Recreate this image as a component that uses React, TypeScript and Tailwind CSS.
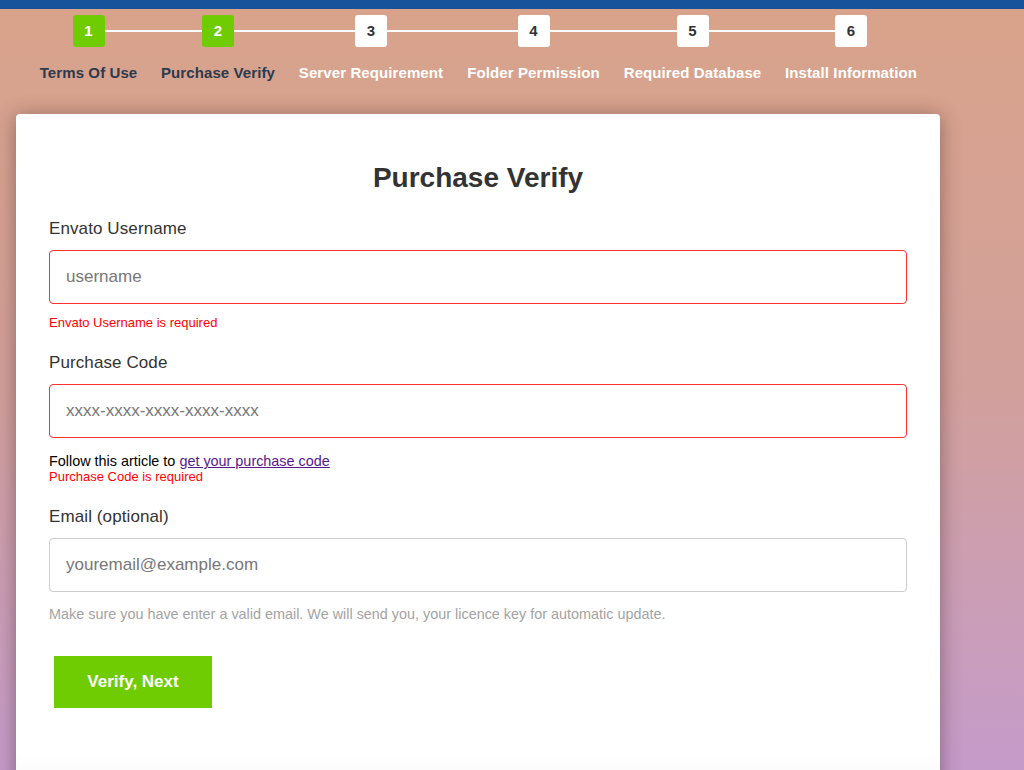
import React from "react";

const steps = [
  { n: 1, label: "Terms Of Use", done: true, w: "w-[121px]" },
  { n: 2, label: "Purchase Verify", done: true, w: "w-[138px]" },
  { n: 3, label: "Server Requirement", done: false, w: "w-[168px]" },
  { n: 4, label: "Folder Permission", done: false, w: "w-[157px]" },
  { n: 5, label: "Required Database", done: false, w: "w-[161px]" },
  { n: 6, label: "Install Information", done: false, w: "w-[156px]" },
];

export default function App() {
  return (
    <div
      className="h-screen w-full overflow-hidden bg-linear-to-b from-[#d9a38a] via-[#d2a09b] to-[#c59bca]"
      style={{ fontFamily: '"Liberation Sans", Arial, Helvetica, sans-serif' }}
    >
      <div className="h-[9px] bg-[#17539b]" />

      {/* Stepper */}
      <div className="flex pl-[28px] pt-[6px]">
        {steps.map((s, i) => (
          <div key={s.n} className={`flex flex-col items-center ${s.w}`}>
            <div className="flex w-full items-center">
              <div className={`h-[2px] flex-1 ${i === 0 ? "bg-transparent" : "bg-white"}`} />
              <div
                className={`flex h-[32px] w-[32px] items-center justify-center rounded-[3px] text-[15px] font-bold ${
                  s.done ? "bg-[#6fcc02] text-white" : "bg-white text-[#333]"
                }`}
              >
                {s.n}
              </div>
              <div className={`h-[2px] flex-1 ${i === steps.length - 1 ? "bg-transparent" : "bg-white"}`} />
            </div>
            <div
              className={`mt-[17px] text-center text-[15px] font-bold leading-[17px] tracking-[0.1px] whitespace-nowrap ${
                s.done ? "text-[#2b3a4e]" : "text-white"
              }`}
            >
              {s.label}
            </div>
          </div>
        ))}
      </div>

      {/* Card */}
      <div className="ml-[16px] mt-[33px] w-[924px] rounded-[4px] bg-white shadow-[0_2px_20px_rgba(60,30,30,0.45)]">
        <div className="px-[33px] pt-[48px]">
          <h1 className="text-center text-[28px] font-bold leading-[32px] text-[#333]">Purchase Verify</h1>

          <div className="mt-[25px] text-[17px] leading-[20px] tracking-[0.1px] text-[#333]">Envato Username</div>
          <input
            className="mt-[11px] block h-[54px] w-full rounded-[4px] border border-[#ff3030] px-[16px] text-[17px] text-[#333] outline-none placeholder:text-[#777]"
            placeholder="username"
          />
          <div className="mt-[11px] text-[13px] leading-[15px] text-[#ff0000]">Envato Username is required</div>

          <div className="mt-[23px] text-[17px] leading-[20px] tracking-[0.1px] text-[#333]">Purchase Code</div>
          <input
            className="mt-[11px] block h-[54px] w-full rounded-[4px] border border-[#ff3030] px-[16px] text-[17px] text-[#333] outline-none placeholder:text-[#777]"
            placeholder="xxxx-xxxx-xxxx-xxxx-xxxx"
          />
          <div className="mt-[15px] text-[14.4px] leading-[16px] text-black">
            Follow this article to{" "}
            <a href="#" className="text-[#551a8b] underline">
              get your purchase code
            </a>
          </div>
          <div className="text-[13px] leading-[16px] text-[#ff0000]">Purchase Code is required</div>

          <div className="mt-[22px] text-[17px] leading-[20px] tracking-[0.1px] text-[#333]">Email (optional)</div>
          <input
            className="mt-[11px] block h-[54px] w-full rounded-[4px] border border-[#cccccc] px-[16px] text-[17px] text-[#333] outline-none placeholder:text-[#777]"
            placeholder="youremail@example.com"
          />
          <div className="mt-[14px] text-[14.4px] leading-[16px] text-[#a3a3a3]">
            Make sure you have enter a valid email. We will send you, your licence key for automatic update.
          </div>

          <button className="ml-[5px] mt-[34px] flex h-[52px] w-[158px] items-center justify-center bg-[#6fcc02] text-[17px] font-bold text-white">
            Verify, Next
          </button>
        </div>
        <div className="mt-[46px] h-[40px] rounded-b-[4px] bg-linear-to-b from-white to-[#f7f7f7]" />
      </div>
    </div>
  );
}
